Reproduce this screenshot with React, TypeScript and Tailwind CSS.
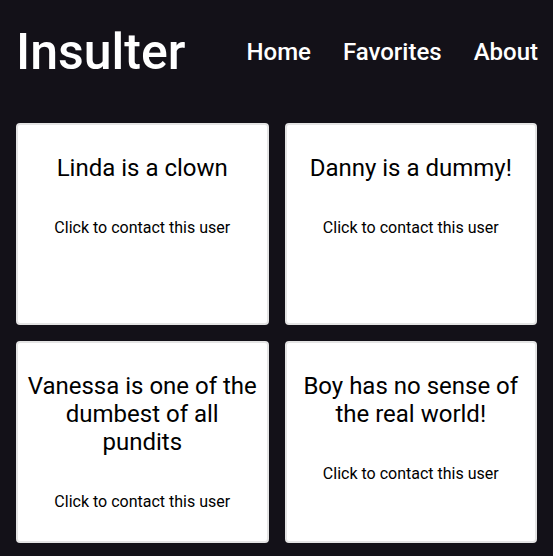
import React from "react";

const cards = [
  "Linda is a clown",
  "Danny is a dummy!",
  "Vanessa is one of the dumbest of all pundits",
  "Boy has no sense of the real world!",
];

export default function App() {
  return (
    <div
      className="min-h-[556px] w-full bg-[#131118]"
      style={{ fontFamily: 'Roboto, "Open Sans", sans-serif' }}
    >
      <header className="flex h-[107px] items-center justify-between pb-[4px] pl-[16px] pr-[15px]">
        <h1 className="text-[50px] font-medium leading-none text-white">Insulter</h1>
        <nav className="flex items-center gap-[32px] text-[24px] font-medium leading-none text-white">
          <a>Home</a>
          <a>Favorites</a>
          <a>About</a>
        </nav>
      </header>
      <main className="grid grid-cols-2 gap-4 px-4 pb-4 pt-4">
        {cards.map((t) => (
          <div
            key={t}
            className="flex h-[202px] flex-col items-center rounded-[4px] border-2 border-[#e4e4e4] bg-white px-[8px] pt-[29px] text-center text-black"
          >
            <h2 className="text-[24px] leading-[28px]">{t}</h2>
            <p className="mt-[34px] text-[16px] leading-[24px]">Click to contact this user</p>
          </div>
        ))}
      </main>
    </div>
  );
}
